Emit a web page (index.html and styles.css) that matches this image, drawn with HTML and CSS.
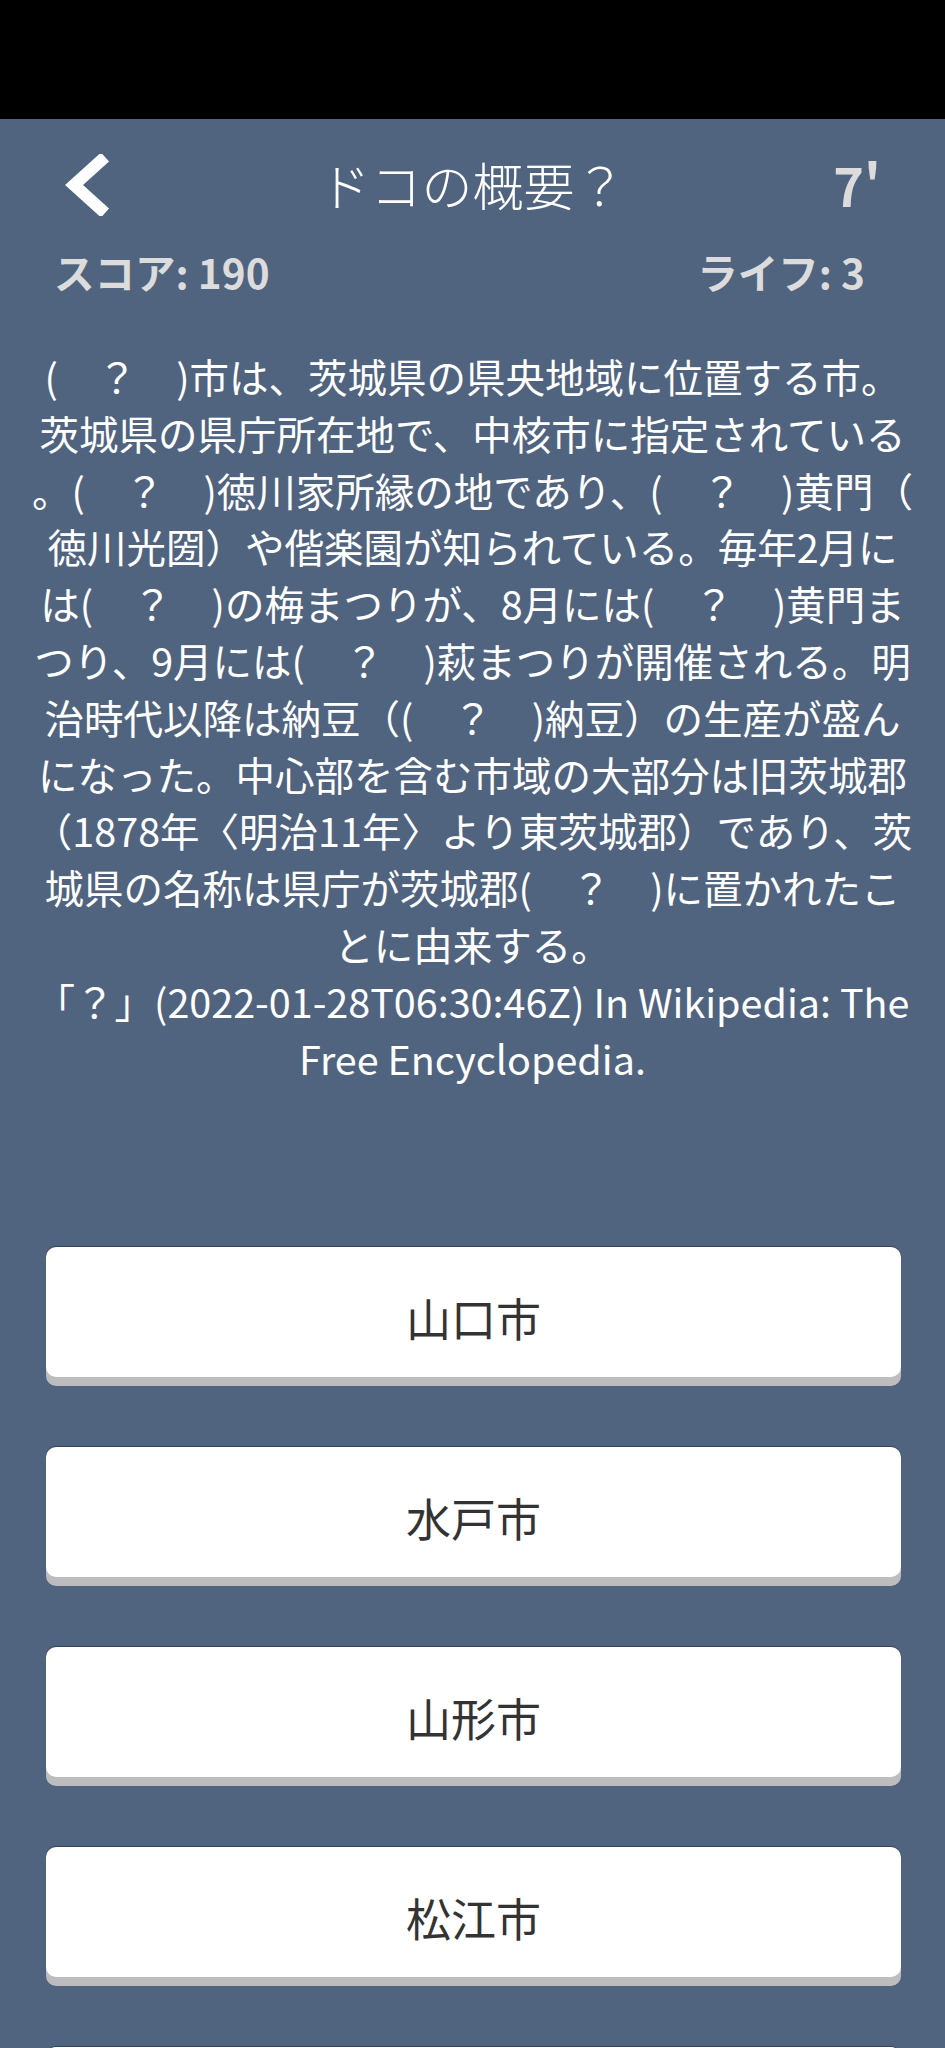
FILE: index.html
```html
<!DOCTYPE html>
<html lang="ja">
<head>
<meta charset="utf-8">
<title>ドコの概要？</title>
<link rel="stylesheet" href="styles.css">
</head>
<body>
<div class="status"></div>
<header class="header">
  <div class="back">
    <svg width="48" height="62" viewBox="0 0 48 62"><polyline points="41,3 10,31 41,59" fill="none" stroke="#fff" stroke-width="12" stroke-linejoin="miter"/></svg>
  </div>
  <div class="title">ドコの概要？</div>
  <div class="timer">7'</div>
</header>
<div class="scores">
  <div class="score">スコア: 190</div>
  <div class="score">ライフ: 3</div>
</div>
<div class="text">
  <div class="line">(　？　)市は、茨城県の県央地域に位置する市。</div>
  <div class="line">茨城県の県庁所在地で、中核市に指定されている</div>
  <div class="line">。(　？　)徳川家所縁の地であり、(　？　)黄門（</div>
  <div class="line">徳川光圀）や偕楽園が知られている。毎年2月に</div>
  <div class="line">は(　？　)の梅まつりが、8月には(　？　)黄門ま</div>
  <div class="line">つり、9月には(　？　)萩まつりが開催される。明</div>
  <div class="line">治時代以降は納豆（(　？　)納豆）の生産が盛ん</div>
  <div class="line">になった。中心部を含む市域の大部分は旧茨城郡</div>
  <div class="line">（1878年〈明治11年〉より東茨城郡）であり、茨</div>
  <div class="line">城県の名称は県庁が茨城郡(　？　)に置かれたこ</div>
  <div class="line">とに由来する。</div>
  <div class="line">「？」(2022-01-28T06:30:46Z) In Wikipedia: The</div>
  <div class="line">Free Encyclopedia.</div>
</div>
<div class="choices">
  <div class="choice">山口市</div>
  <div class="choice">水戸市</div>
  <div class="choice">山形市</div>
  <div class="choice">松江市</div>
  <div class="choice"></div>
</div>
</body>
</html>
```
FILE: styles.css
```css
html, body {
  margin: 0;
  padding: 0;
}
body {
  background: #51647f;
  font-family: "Noto Sans CJK JP", "Noto Sans", sans-serif;
  color: #fff;
  width: 945px;
  height: 2048px;
  overflow: hidden;
}
.status {
  height: 119px;
  background: #000;
}
.header {
  height: 132px;
  display: flex;
  align-items: center;
  justify-content: space-between;
  padding: 0 64px 0 64px;
}
.back {
  width: 120px;
  display: flex;
  align-items: center;
}
.back svg {
  display: block;
}
.title {
  font-size: 51px;
  font-weight: 300;
  line-height: 1;
  margin-top: -2px;
}
.timer {
  width: 120px;
  text-align: right;
  font-size: 52px;
  font-weight: 700;
  color: #dcdcdc;
  line-height: 1;
}
.scores {
  display: flex;
  justify-content: space-between;
  padding: 0 80px 0 54px;
  height: 42px;
  align-items: center;
}
.score {
  font-size: 40.5px;
  font-weight: 700;
  color: #dcdcdc;
  line-height: 42px;
}
.text {
  margin-top: 55px;
  text-align: center;
  font-size: 39.5px;
  line-height: 56.8px;
}
.line {
  white-space: nowrap;
}
.choices {
  margin-top: 160px;
  padding: 0 44px 0 46px;
  display: flex;
  flex-direction: column;
  gap: 60px;
}
.choice {
  height: 130px;
  background: #fff;
  border-radius: 10px;
  box-shadow: 0 9px 0 #bdbdc0, 0 -1px 1px rgba(0,0,0,0.35);
  margin-bottom: 9px;
  margin-top: 1px;
  display: flex;
  align-items: center;
  justify-content: center;
  padding-top: 10px;
  box-sizing: border-box;
  color: #333;
  font-size: 45px;
  line-height: 1;
  flex-shrink: 0;
}
```
